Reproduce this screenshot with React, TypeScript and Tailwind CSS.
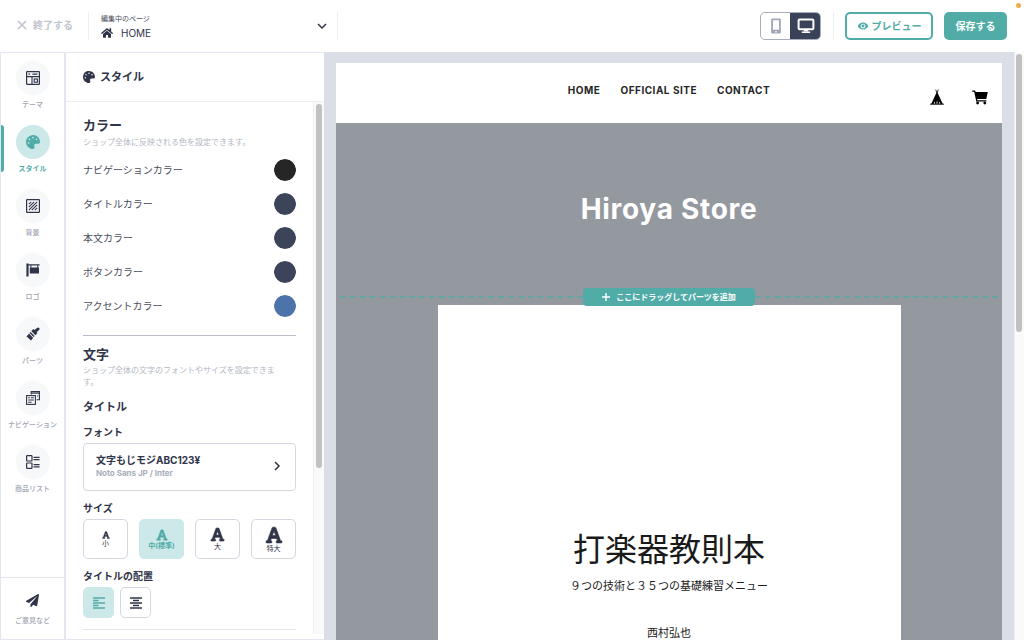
import React, { useState } from "react";
import { clsx } from "clsx";
import { FaFont, FaHome, FaPalette, FaPaperPlane } from "react-icons/fa";
import { IoMdEye } from "react-icons/io";

const ThemeIcon = () => (
  <svg viewBox="0 0 14 14" className="h-3.5 w-3.5" fill="none" stroke="currentColor">
    <rect x="0.6" y="0.6" width="12.8" height="12.8" rx="0.6" strokeWidth="1.2" />
    <path d="M0.6 5.6h12.8M6 5.6v7.8" strokeWidth="1.1" />
    <path d="M2.4 3.1h1.8M6.4 3.1h5" strokeWidth="1.1" />
    <rect x="8.2" y="8" width="3.2" height="3.2" strokeWidth="1.1" />
  </svg>
);

const BackgroundIcon = () => (
  <svg viewBox="0 0 14 14" className="h-3.5 w-3.5" fill="none" stroke="currentColor">
    <rect x="0.6" y="0.6" width="12.8" height="12.8" rx="0.6" strokeWidth="1.2" />
    <path
      d="M2.8 5.2l2.4-2.4M2.8 8.2l5.4-5.4M2.8 11.2l8.4-8.4M5.8 11.2l5.4-5.4M8.8 11.2l2.4-2.4"
      strokeWidth="1.1"
    />
  </svg>
);

const LogoIcon = () => (
  <svg viewBox="0 0 14 14" className="h-3.5 w-3.5" fill="currentColor">
    <path d="M0.4 0.6h2.2v12.8h-2.2zM2.6 1.2h11v1.4h-11zM4.4 2.6h1v2h-1zM11.2 2.6h1v2h-1zM3.8 4.6h9.2v5.8H3.8z" />
  </svg>
);

const PartsIcon = () => (
  <svg viewBox="0 0 14 14" className="h-3.5 w-3.5" fill="currentColor">
    <path d="M11.4 0.7a1.4 1.4 0 0 1 1.9 2L10.6 5.2l0.9 0.9-2.1 2.1-4.1-4.1 2.1-2.1 0.9 0.9z" />
    <path d="M4.6 4.9l4.1 4.1-1.1 1.1L3.5 6z" />
    <path d="M2.9 6.5l4.2 4.2c-0.8 1-1.2 2.1-2.1 2.9L0.4 9.2c0.9-0.3 1.7-1.4 2.5-2.7z" />
  </svg>
);

const NavigationIcon = () => (
  <svg viewBox="0 0 14 14" className="h-3.5 w-3.5" fill="none" stroke="currentColor">
    <path d="M5.2 3.6V0.6h8.2v8.2h-2.8" strokeWidth="1.1" />
    <path d="M5.2 2.1h8.2" strokeWidth="1.2" />
    <rect x="0.6" y="4.6" width="8.8" height="8.8" strokeWidth="1.1" />
    <path d="M2.2 6.8h1.6M4.8 6.8h3M2.2 9h5.6M2.2 11.2h3.4M11 5h1.2" strokeWidth="1.1" />
  </svg>
);

const ListIcon = () => (
  <svg viewBox="0 0 14 14" className="h-3.5 w-3.5" fill="none" stroke="currentColor">
    <rect x="0.6" y="0.6" width="5.4" height="5.4" rx="0.6" strokeWidth="1.2" />
    <rect x="0.6" y="8" width="5.4" height="5.4" rx="0.6" strokeWidth="1.2" />
    <path d="M7.6 2.4h6M7.6 4.6h6M7.6 9.6h6M7.6 11.8h6" strokeWidth="1.2" />
  </svg>
);

const PhoneIcon = () => (
  <svg viewBox="0 0 10 16" className="h-4 w-2.5" fill="currentColor">
    <path
      fillRule="evenodd"
      d="M1 0.4h8a0.8 0.8 0 0 1 0.8 0.8v13.6a0.8 0.8 0 0 1-0.8 0.8H1a0.8 0.8 0 0 1-0.8-0.8V1.2A0.8 0.8 0 0 1 1 0.4zM2 2.2v9.6h6V2.2zM4.3 13v1.4h1.4V13z"
    />
  </svg>
);

const MonitorIcon = () => (
  <svg viewBox="0 0 18 16" className="h-4 w-[18px]" fill="none" stroke="currentColor">
    <rect x="1.6" y="1.4" width="14.8" height="9.8" rx="1" strokeWidth="2" />
    <path d="M6.8 11.5h4.4v2H6.8z" fill="currentColor" stroke="none" />
    <path d="M4.8 14.2h8.4" strokeWidth="1.6" />
  </svg>
);

const TentIcon = () => (
  <svg viewBox="0 0 14 16" className="h-4 w-3.5" fill="none" stroke="currentColor">
    <path d="M5.2 0.5L7.4 4M8.8 0.5L6.6 4M7 0.8V3" strokeWidth="0.6" />
    <path d="M7 2.6l5.8 12.4H1.2z" fill="currentColor" stroke="none" />
    <path d="M0.2 15.2h13.6" strokeWidth="1" />
    <path
      d="M3.6 14.6l0.9-1.8 0.8 1.8zM6.4 14.6L7 11.6l0.7 3zM8.8 14.6l0.7-1.8 1 1.8z"
      fill="#fff"
      stroke="none"
    />
  </svg>
);

const CartIcon = () => (
  <svg viewBox="0 0 16 15" className="h-[15px] w-4" fill="currentColor">
    <path d="M0.2 0.4h2.9l0.6 1.6h12.1l-1.5 7H5.1l0.3 1.3h8.9v1.3H4.3L2.2 1.8h-2z" />
    <circle cx="5.6" cy="13" r="1.4" />
    <circle cx="12.8" cy="13" r="1.4" />
  </svg>
);

const LinesIcon = ({ d }: { d: string }) => (
  <svg viewBox="0 0 12 12" className="h-3 w-3" fill="none" stroke="currentColor">
    <path d={d} strokeWidth="1.7" />
  </svg>
);

const Chevron = ({ d }: { d: string }) => (
  <svg viewBox="0 0 10 10" className="h-2.5 w-2.5 shrink-0" fill="none" stroke="currentColor">
    <path d={d} strokeWidth="1.5" />
  </svg>
);

const menu = [
  { label: "テーマ", icon: <ThemeIcon /> },
  { label: "スタイル", icon: <FaPalette className="h-3.5 w-3.5" /> },
  { label: "背景", icon: <BackgroundIcon /> },
  { label: "ロゴ", icon: <LogoIcon /> },
  { label: "パーツ", icon: <PartsIcon /> },
  { label: "ナビゲーション", icon: <NavigationIcon /> },
  { label: "商品リスト", icon: <ListIcon /> },
];

const initialColors = [
  { id: "nav", label: "ナビゲーションカラー", value: "#262626" },
  { id: "title", label: "タイトルカラー", value: "#3c445a" },
  { id: "body", label: "本文カラー", value: "#3c445a" },
  { id: "button", label: "ボタンカラー", value: "#3c445a" },
  { id: "accent", label: "アクセントカラー", value: "#4c74ab" },
];

const sizes = [
  { id: "s", label: "小", icon: "h-2 w-2" },
  { id: "m", label: "中(標準)", icon: "h-3 w-3" },
  { id: "l", label: "大", icon: "h-[15px] w-[15px]" },
  { id: "xl", label: "特大", icon: "h-[18px] w-[18px]" },
];

const aligns = [
  { id: "left", label: "左揃え", d: "M0 1h12M0 3.5h5.5M0 6h12M0 8.5h5.5M0 11h12" },
  { id: "center", label: "中央揃え", d: "M0 1h12M3 3.5h6M0 6h12M3 8.5h6M0 11h12" },
];

const Header = () => (
  <header className="relative flex h-[52px] shrink-0 items-center bg-white px-[17px]">
    <button className="flex items-center gap-1.5 pb-0.5 text-[10px] font-bold text-[#bfc4cf]">
      <svg viewBox="0 0 10 10" className="h-2.5 w-2.5" fill="none" stroke="currentColor">
        <path d="M1 1l8 8M9 1L1 9" strokeWidth="1.6" />
      </svg>
      終了する
    </button>
    <div className="ml-[15px] flex h-7 w-[250px] flex-col justify-between border-x border-[#eceef2] pr-2.5 pb-px pl-3">
      <label htmlFor="page" className="text-[7px] leading-[14px] text-[#4a4e60]">
        編集中のページ
      </label>
      <div className="relative flex items-center">
        <FaHome className="h-3 w-3 shrink-0" />
        <select
          id="page"
          className="-my-1 ml-2 h-[14px] flex-1 appearance-none bg-transparent text-[10px] leading-[14px] outline-none"
        >
          <option>HOME</option>
        </select>
        <span className="pointer-events-none absolute -top-1.5 right-0">
          <Chevron d="M1 3l4 4 4-4" />
        </span>
      </div>
    </div>

    <div className="ml-auto flex items-center">
      <div className="flex h-7 overflow-hidden rounded-[5px] border border-[#a7adbc]">
        <button aria-label="スマートフォン" className="flex w-[29px] items-center justify-center text-[#a0a6b6]">
          <PhoneIcon />
        </button>
        <button aria-label="パソコン" className="-my-px -mr-px flex w-[31px] items-center justify-center bg-[#3a4259] text-white">
          <MonitorIcon />
        </button>
      </div>
      <div className="mr-[11px] ml-3 h-7 w-px bg-[#eceef2]" />
      <button className="flex h-7 w-[88px] items-center justify-center gap-[3px] rounded-[5px] border-2 border-[#51aca8] text-[10px] font-bold text-[#51aca8]">
        <IoMdEye className="h-3 w-3" />
        プレビュー
      </button>
      <button className="ml-[11px] h-7 w-[63px] rounded-[5px] bg-[#51aca8] text-[10px] font-bold text-white">
        保存する
      </button>
    </div>
    <span className="absolute top-[3px] right-[3px] h-[5px] w-[5px] rounded-full bg-[#f7a94b]" />
  </header>
);

const Rail = () => {
  const [active, setActive] = useState("スタイル");

  return (
    <nav className="flex w-[66px] shrink-0 flex-col justify-between border-r-2 border-l border-[#e3e6ee]">
      <div className="flex flex-col pt-2">
        {menu.map((item) => (
          <button
            key={item.label}
            onClick={() => setActive(item.label)}
            className="relative flex h-16 flex-col items-center"
          >
            {active === item.label && (
              <span className="absolute top-0 left-0 h-[47px] w-[3px] rounded-r-sm bg-[#51aca8]" />
            )}
            <span
              className={clsx(
                "flex h-[34px] w-[34px] items-center justify-center rounded-full",
                active === item.label
                  ? "bg-[#cde8e8] text-[#51aca8]"
                  : "bg-[#f7f8fa]",
              )}
            >
              {item.icon}
            </span>
            <span
              className={clsx(
                "mt-[5px] text-[7px] leading-[10px] whitespace-nowrap",
                active === item.label
                  ? "font-bold text-[#51aca8]"
                  : "font-medium text-[#9ea4b3]",
              )}
            >
              {item.label}
            </span>
          </button>
        ))}
      </div>
      <button className="flex h-[62px] flex-col items-center border-t border-[#e3e6ee] pt-4">
        <FaPaperPlane className="h-[13px] w-[13px]" />
        <span className="mt-[9px] text-[7px] leading-[10px] font-medium text-[#9ea4b3]">
          ご意見など
        </span>
      </button>
    </nav>
  );
};

const StylePanel = () => {
  const [colors, setColors] = useState(initialColors);
  const [size, setSize] = useState("m");
  const [align, setAlign] = useState("left");

  const changeColor = (id: string, value: string) =>
    setColors((prev) => prev.map((c) => (c.id === id ? { ...c, value } : c)));

  return (
    <aside className="flex w-[258px] shrink-0 flex-col pb-[5px]">
      <h1 className="flex h-[49px] shrink-0 items-center gap-[5px] border-b border-[#eceef2] pl-[17px] text-[11px] font-bold">
        <FaPalette className="h-3 w-3" />
        スタイル
      </h1>

      <div className="flex min-h-0 flex-1">
        <div className="min-w-0 flex-1 overflow-hidden px-[17px] pt-3.5">
          <h2 className="text-[13px] leading-[18px] font-bold">カラー</h2>
          <p className="mt-0.5 text-[8px] leading-3 text-[#b3b8c4]">
            ショップ全体に反映される色を設定できます。
          </p>
          <div className="mt-[11px] flex flex-col gap-3">
            {colors.map((color) => (
              <label
                key={color.id}
                className="flex h-[22px] items-center justify-between text-[10px] text-[#4a4e60]"
              >
                {color.label}
                <input
                  type="color"
                  value={color.value}
                  onChange={(e) => changeColor(color.id, e.target.value)}
                  className="h-[22px] w-[22px] cursor-pointer appearance-none rounded-full [&::-webkit-color-swatch]:rounded-full [&::-webkit-color-swatch]:border-0 [&::-webkit-color-swatch-wrapper]:p-0"
                />
              </label>
            ))}
          </div>

          <hr className="mt-[18px] border-[#b9bdc9]" />

          <h2 className="mt-[9px] text-[13px] leading-[18px] font-bold">文字</h2>
          <p className="mt-px pr-4 text-[8px] leading-3 text-[#b3b8c4]">
            ショップ全体の文字のフォントやサイズを設定できます。
          </p>
          <h3 className="mt-[11px] text-[11px] leading-4 font-bold">タイトル</h3>

          <h4 className="mt-2.5 text-[10px] leading-[14px] font-bold">フォント</h4>
          <button className="mt-1 flex h-12 w-full items-center justify-between rounded-sm border border-[#d3d7e0] pr-[13px] pb-0.5 pl-3 text-left">
            <span>
              <span className="block text-[10px] leading-[14px] font-bold">
                文字もじモジABC123¥
              </span>
              <span className="block text-[8px] leading-3 font-bold text-[#a7adbc]">
                Noto Sans JP / Inter
              </span>
            </span>
            <Chevron d="M3 1l4 4-4 4" />
          </button>

          <fieldset className="mt-2.5">
            <legend className="text-[10px] leading-[14px] font-bold">サイズ</legend>
            <div className="mt-1 grid grid-cols-4 gap-[11px]">
              {sizes.map((s) => (
                <label
                  key={s.id}
                  className={clsx(
                    "relative flex h-10 cursor-pointer flex-col items-center justify-center rounded-[5px] border text-[7px] leading-[9px] whitespace-nowrap",
                    size === s.id
                      ? "border-[#cde8e8] bg-[#cde8e8] font-bold text-[#51aca8]"
                      : "border-[#d3d7e0]",
                  )}
                >
                  <input
                    type="radio"
                    name="size"
                    className="sr-only"
                    checked={size === s.id}
                    onChange={() => setSize(s.id)}
                  />
                  <FaFont className={clsx(s.icon, "stroke-current stroke-[20]")} />
                  {s.label}
                </label>
              ))}
            </div>
          </fieldset>

          <fieldset className="mt-2.5">
            <legend className="text-[10px] leading-[14px] font-bold">
              タイトルの配置
            </legend>
            <div className="mt-1 flex gap-1.5">
              {aligns.map((a) => (
                <label
                  key={a.id}
                  className={clsx(
                    "relative flex h-[31px] w-[31px] cursor-pointer items-center justify-center rounded-[5px] border",
                    align === a.id
                      ? "border-[#cde8e8] bg-[#cde8e8] text-[#51aca8]"
                      : "border-[#d3d7e0]",
                  )}
                >
                  <input
                    type="radio"
                    name="align"
                    aria-label={a.label}
                    className="sr-only"
                    checked={align === a.id}
                    onChange={() => setAlign(a.id)}
                  />
                  <LinesIcon d={a.d} />
                </label>
              ))}
            </div>
          </fieldset>

          <hr className="mt-[11px] border-[#e3e6ee]" />
        </div>

        {/* Scrollbar */}
        <div className="w-[11px] border-l border-[#eceef2] bg-[#fafafa] px-0.5 pt-0.5">
          <div className="h-[364px] w-1.5 rounded-full bg-[#c1c1c1]" />
        </div>
      </div>
    </aside>
  );
};

const Preview = () => (
  <main className="flex min-w-0 flex-1 bg-[#dadfe7]">
    <div className="flex min-w-0 flex-1 flex-col overflow-hidden px-3 pt-[11px]">
      <div className="grid h-[60px] shrink-0 grid-cols-[1fr_auto_1fr] bg-white">
        <nav className="col-start-2 flex gap-5 pt-5 text-[10px] leading-[14px] font-bold tracking-wider text-[#262626]">
          <a href="#home">HOME</a>
          <a href="#official">OFFICIAL SITE</a>
          <a href="#contact">CONTACT</a>
        </nav>
        <div className="flex items-center justify-end gap-7 pt-2 pr-3.5 text-black">
          <a href="#camp" aria-label="Camp">
            <TentIcon />
          </a>
          <a href="#cart" aria-label="Cart">
            <CartIcon />
          </a>
        </div>
      </div>

      <div className="flex flex-1 flex-col items-center bg-[#94989f]">
        <h1 className="pt-[68px] text-[28px] leading-9 font-bold tracking-wide text-white">
          Hiroya Store
        </h1>
        <div className="z-10 mt-[61px] flex w-full items-center px-1">
          <span className="flex-1 border-t-2 border-dashed border-[#51aca8]/70" />
          <button className="flex h-[18px] w-[172px] items-center justify-center gap-1.5 rounded-sm bg-[#51aca8] text-[8px] font-bold text-white">
            <svg viewBox="0 0 8 8" className="h-2 w-2" fill="none" stroke="currentColor">
              <path d="M4 0v8M0 4h8" strokeWidth="1.4" />
            </svg>
            ここにドラッグしてパーツを追加
          </button>
          <span className="flex-1 border-t-2 border-dashed border-[#51aca8]/70" />
        </div>
        <article className="-mt-px flex w-[463px] max-w-full flex-1 flex-col items-center bg-white pt-[225px] text-[#1a1a1a]">
          <h2 className="text-[32px] leading-10">打楽器教則本</h2>
          <p className="mt-2 text-[11px] leading-4">
            ９つの技術と３５つの基礎練習メニュー
          </p>
          <p className="mt-[31px] text-[11px] leading-4">西村弘也</p>
        </article>
      </div>
    </div>

    <div className="w-2.5 border-l border-[#eceef2] bg-[#fafafa] px-px pt-0.5">
      <div className="h-[278px] w-1.5 rounded-full bg-[#c1c1c1]" />
    </div>
  </main>
);

const App = () => (
  <div className="flex h-screen flex-col overflow-hidden bg-white font-['Inter','Noto_Sans_CJK_JP',sans-serif] text-[#2f3448]">
    <Header />
    <div className="flex min-h-0 flex-1">
      <div className="flex shrink-0 border-y border-[#e3e6ee]">
        <Rail />
        <StylePanel />
      </div>
      <Preview />
    </div>
  </div>
);

export default App;
